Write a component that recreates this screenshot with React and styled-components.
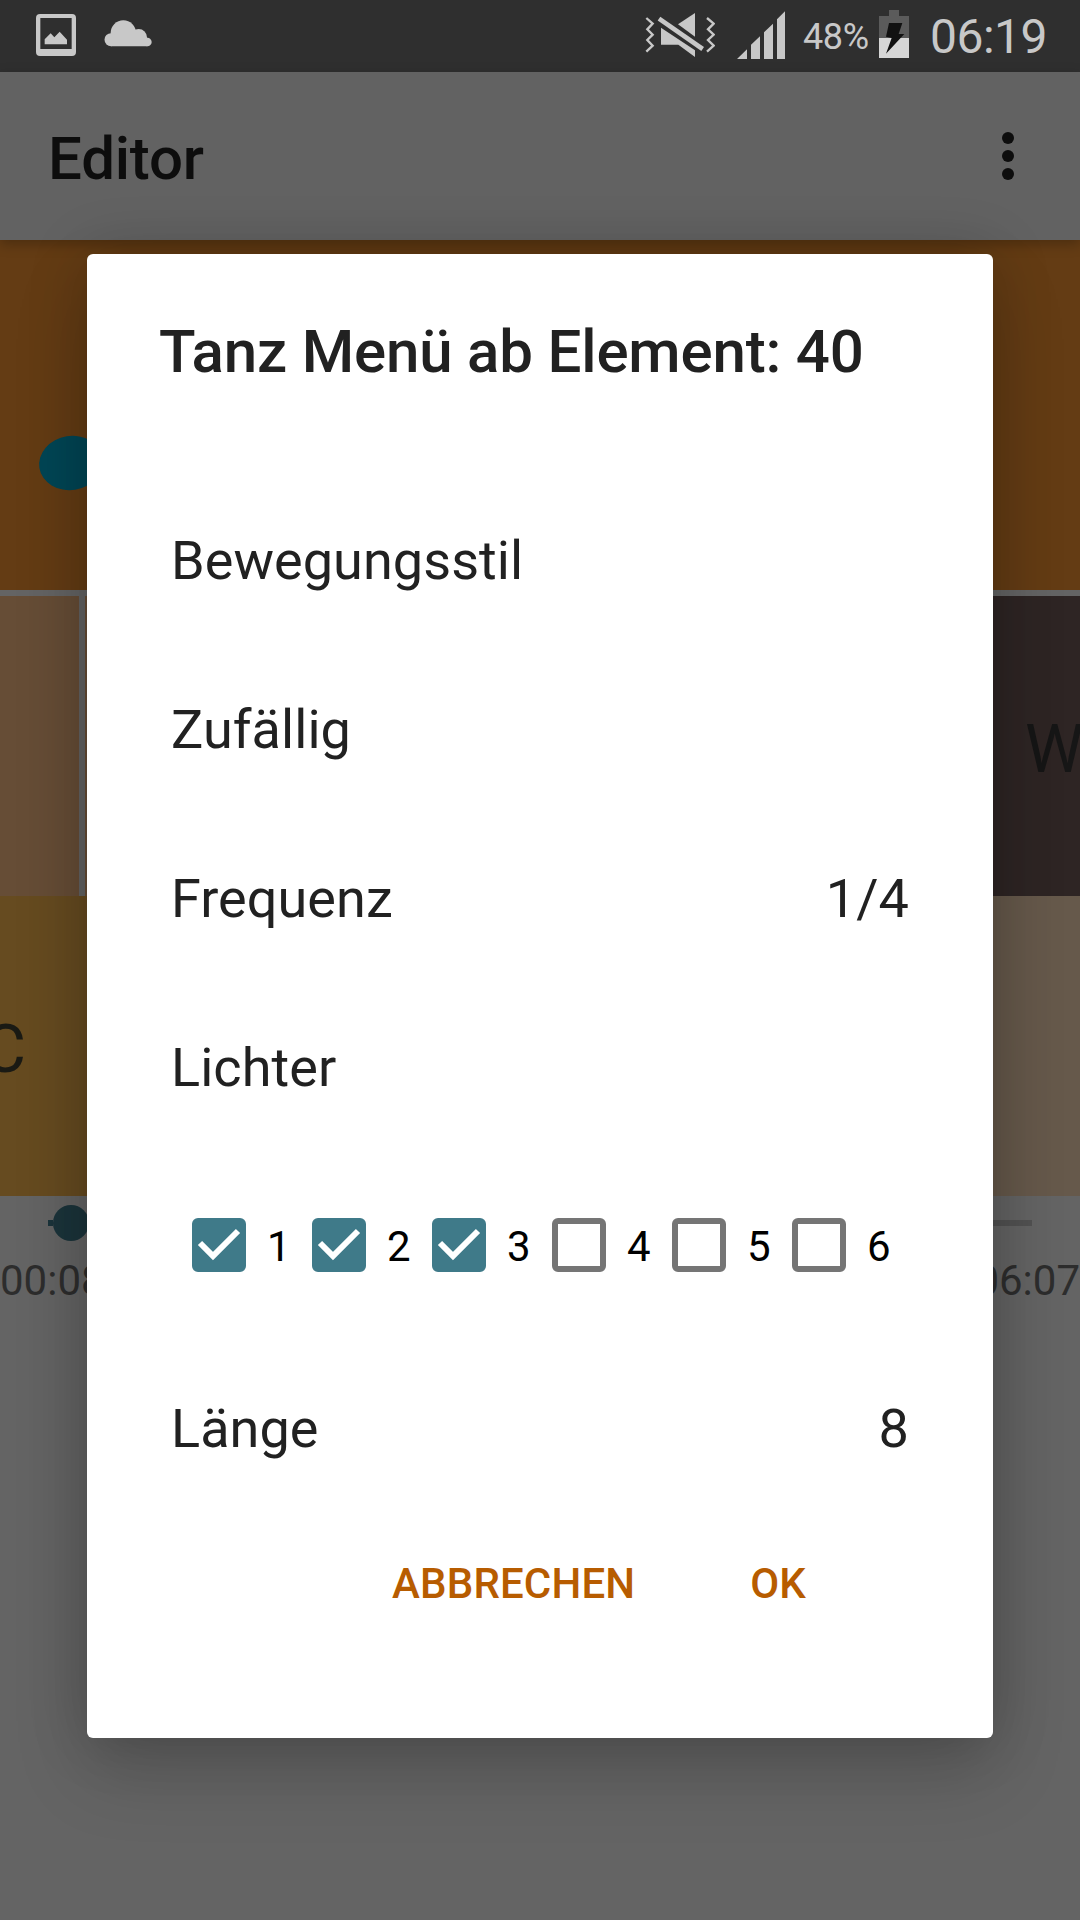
import React from "react";
import styled, { createGlobalStyle } from "styled-components";

const GlobalStyle = createGlobalStyle`
  *, *::before, *::after { box-sizing: border-box; }
  html, body { margin: 0; padding: 0; background: #646464; }
  body { font-family: Roboto, "Liberation Sans", sans-serif; -webkit-font-smoothing: antialiased; }
  button { font: inherit; border: 0; background: none; padding: 0; margin: 0; }
`;

const Screen = styled.div`
  position: relative;
  display: flex;
  flex-direction: column;
  width: 1080px;
  height: 1920px;
  overflow: hidden;
  background: #646464;
`;

const StatusBar = styled.header`
  display: flex;
  justify-content: space-between;
  height: 72px;
  padding: 0 30px 0 36px;
  background: #2f2f2f;
  color: #c8c8c8;
  flex: none;
  svg { display: block; flex: none; }
`;

const StatusGroup = styled.div`
  display: flex;
  align-items: flex-start;
  gap: ${(p) => p.$gap || 0}px;
`;

const SignalSlot = styled.div`
  margin-left: 22px;
`;

const Percent = styled.span`
  width: 76px;
  margin-left: 18px;
  font-size: 36px;
  line-height: 74px;
  letter-spacing: -0.4px;
`;

const Clock = styled.span`
  width: 120px;
  margin-left: 21px;
  font-size: 48px;
  line-height: 73px;
  letter-spacing: -0.5px;
  white-space: nowrap;
`;

const AppBar = styled.div`
  position: relative;
  display: flex;
  align-items: center;
  justify-content: space-between;
  height: 168px;
  padding: 5px 54px 5px 48px;
  background: #626262;
  box-shadow: 0 4px 12px rgba(0, 0, 0, 0.25);
  flex: none;
`;

const AppTitle = styled.h1`
  margin: 0;
  padding-top: 6px;
  font-size: 60px;
  line-height: 70px;
  font-weight: 500;
  letter-spacing: -0.2px;
  color: #0d0d0d;
`;

const MoreButton = styled.button`
  display: flex;
  flex-direction: column;
  align-items: center;
  gap: 6px;
  width: 36px;
  i { width: 12px; height: 12px; border-radius: 50%; background: #0d0d0d; }
`;

const Stage = styled.div`
  height: 350px;
  padding: 196px 0 0 39px;
  background: #643c14;
  flex: none;
`;

const Blob = styled.div`
  width: 64px;
  height: 54px;
  border-radius: 50%;
  background: #004655;
  transform: rotate(-9deg);
`;

const Track = styled.div`
  display: flex;
  gap: ${(p) => p.$gap || 0}px;
  height: 300px;
  margin-top: ${(p) => p.$top || 0}px;
  flex: none;
  overflow: hidden;
`;

const Cell = styled.div`
  display: flex;
  align-items: center;
  flex: ${(p) => (p.$width ? `0 0 ${p.$width}px` : "1")};
  min-width: 0;
  background: ${(p) => p.$color};
  color: ${(p) => p.$ink || "#1a1a14"};
  font-size: 66px;
  line-height: 78px;
  padding-top: 7px;
`;

const CellText = styled.span`
  margin-left: ${(p) => p.$offset}px;
`;

const Seek = styled.div`
  display: flex;
  align-items: center;
  height: 36px;
  margin: 9px 48px 0;
  flex: none;
`;

const SeekLine = styled.div`
  height: 6px;
  flex: ${(p) => (p.$done ? "0 0 5px" : "1")};
  background: ${(p) => (p.$done ? "#1b343b" : "#525252")};
`;

const SeekThumb = styled.div`
  width: 36px;
  height: 36px;
  border-radius: 50%;
  background: #1b343b;
`;

const Times = styled.div`
  display: flex;
  justify-content: space-between;
  margin-top: 15px;
  font-size: 42px;
  line-height: 50px;
  color: #2d2d2d;
`;

const Dialog = styled.section`
  position: absolute;
  left: 87px;
  top: 254px;
  display: flex;
  flex-direction: column;
  width: 906px;
  height: 1484px;
  border-radius: 6px;
  background: #fff;
  color: #212121;
  box-shadow: 0 34px 76px rgba(0, 0, 0, 0.16), 0 0 60px rgba(0, 0, 0, 0.18);
`;

const DialogTitle = styled.h2`
  margin: 0;
  padding: 62px 72px 0;
  height: 222px;
  font-size: 60px;
  line-height: 71px;
  font-weight: 500;
  letter-spacing: -0.17px;
  white-space: nowrap;
`;

const Option = styled.div`
  display: flex;
  align-items: center;
  justify-content: space-between;
  height: 169px;
  padding: 0 84px;
  font-size: 54px;
  line-height: 64px;
  letter-spacing: 0.06px;
`;

const Lights = styled.div`
  display: flex;
  align-items: center;
  height: 192px;
  padding: 0 0 6px 105px;
`;

const Light = styled.label`
  display: flex;
  align-items: center;
  flex: 0 0 120px;
  color: #000;
  font-size: 42px;
  line-height: 50px;
  span { padding: 3px 0 0 21px; }
`;

const Box = styled.div`
  width: 54px;
  height: 54px;
  flex: none;
  border-radius: 6px;
  border: 6px solid ${(p) => (p.$on ? "#3f7a89" : "#757575")};
  background: ${(p) => (p.$on ? "#3f7a89" : "#fff")};
  svg { display: block; margin: -6px; }
`;

const Actions = styled.div`
  display: flex;
  justify-content: flex-end;
  gap: 115px;
  height: 144px;
  padding-right: 187px;
`;

const Action = styled.button`
  color: #b75c00;
  font-size: 42px;
  line-height: 142px;
  height: 142px;
  font-weight: 500;
  letter-spacing: 0.15px;
`;

const ImageIcon = () => (
  <svg width="40" height="72" viewBox="108 0 120 216" fill="#c8c8c8">
    <path fillRule="evenodd" d="M120 42H216Q228 42 228 54V156Q228 168 216 168H120Q108 168 108 156V54Q108 42 120 42ZM121 54V147H215V54Z" />
    <path d="M134 133V118L152 100L163 112L179 95L201 119V133Z" />
  </svg>
);

const CloudIcon = () => (
  <svg width="48" height="72" viewBox="313 0 144 216" fill="#c8c8c8">
    <circle cx="371" cy="99" r="38" />
    <circle cx="417" cy="112" r="25" />
    <circle cx="334" cy="119" r="19.5" />
    <circle cx="443" cy="126" r="13" />
    <path d="M334 105H417L443 113V139H334Z" />
  </svg>
);

const MuteIcon = () => (
  <svg width="70" height="72" viewBox="45 0 210 216" fill="#c8c8c8">
    <g fill="none" stroke="#c8c8c8" strokeWidth="7">
      <path d="M49 54L68 71L52 88L68 104L52 120L68 137L49 155" />
      <path d="M231 54L251 71L234 88L251 104L234 120L251 137L231 155" />
      <path d="M87 56L218 147" strokeWidth="14" />
    </g>
    <path d="M195 39V110L144 73Z" />
    <path d="M93 83V134H145L195 171V151Z" />
  </svg>
);

const SignalIcon = () => (
  <svg width="48" height="72" viewBox="321 0 144 216" fill="#c8c8c8">
    <path d="M321 177L351 148V177ZM363 134L390 109V177H363ZM402 97L429 71V177H402ZM441 58L465 34V177H441Z" />
  </svg>
);

const BatteryIcon = () => (
  <svg width="30" height="72" viewBox="747 0 90 216">
    <path d="M777 30H807V48H837V114H747V48H777Z" fill="#5b5b5b" />
    <path d="M747 114H837V174H747Z" fill="#d6d6d6" />
    <path d="M777 69H817L806 102H823L768 161L785 114L768 110Z" fill="#111" />
  </svg>
);

const CheckIcon = () => (
  <svg width="54" height="54" viewBox="0 0 54 54" fill="none" stroke="#fff" strokeWidth="6">
    <path d="M8 25L21 38L46 13" />
  </svg>
);

const options = [
  { label: "Bewegungsstil" },
  { label: "Zufällig" },
  { label: "Frequenz", value: "1/4" },
  { label: "Lichter" },
];

const lights = [true, true, true, false, false, false];

export default function App() {
  return (
    <>
      <GlobalStyle />
      <Screen>
        <StatusBar>
          <StatusGroup $gap={28}>
            <ImageIcon />
            <CloudIcon />
          </StatusGroup>
          <StatusGroup>
            <MuteIcon />
            <SignalSlot>
              <SignalIcon />
            </SignalSlot>
            <Percent>48%</Percent>
            <BatteryIcon />
            <Clock>06:19</Clock>
          </StatusGroup>
        </StatusBar>
        <AppBar>
          <AppTitle>Editor</AppTitle>
          <MoreButton aria-label="Menü">
            <i />
            <i />
            <i />
          </MoreButton>
        </AppBar>
        <Stage>
          <Blob />
        </Stage>
        <Track $gap={6} $top={6}>
          <Cell $width={79} $color="#664d36" />
          <Cell $width={449} $color="#664d36" />
          <Cell $color="#2e2524" $ink="#161616">
            <CellText $offset={485}>W</CellText>
          </Cell>
        </Track>
        <Track>
          <Cell $width={540} $color="#664b20">
            <CellText $offset={-17}>C</CellText>
          </Cell>
          <Cell $color="#66594b" />
        </Track>
        <Seek>
          <SeekLine $done />
          <SeekThumb />
          <SeekLine />
        </Seek>
        <Times>
          <span>00:08</span>
          <span>06:07</span>
        </Times>
        <Dialog role="dialog">
          <DialogTitle>Tanz Menü ab Element: 40</DialogTitle>
          {options.map((o) => (
            <Option key={o.label}>
              <span>{o.label}</span>
              {o.value && <span>{o.value}</span>}
            </Option>
          ))}
          <Lights>
            {lights.map((on, i) => (
              <Light key={i}>
                <Box $on={on}>{on && <CheckIcon />}</Box>
                <span>{i + 1}</span>
              </Light>
            ))}
          </Lights>
          <Option>
            <span>Länge</span>
            <span>8</span>
          </Option>
          <Actions>
            <Action>ABBRECHEN</Action>
            <Action>OK</Action>
          </Actions>
        </Dialog>
      </Screen>
    </>
  );
}
